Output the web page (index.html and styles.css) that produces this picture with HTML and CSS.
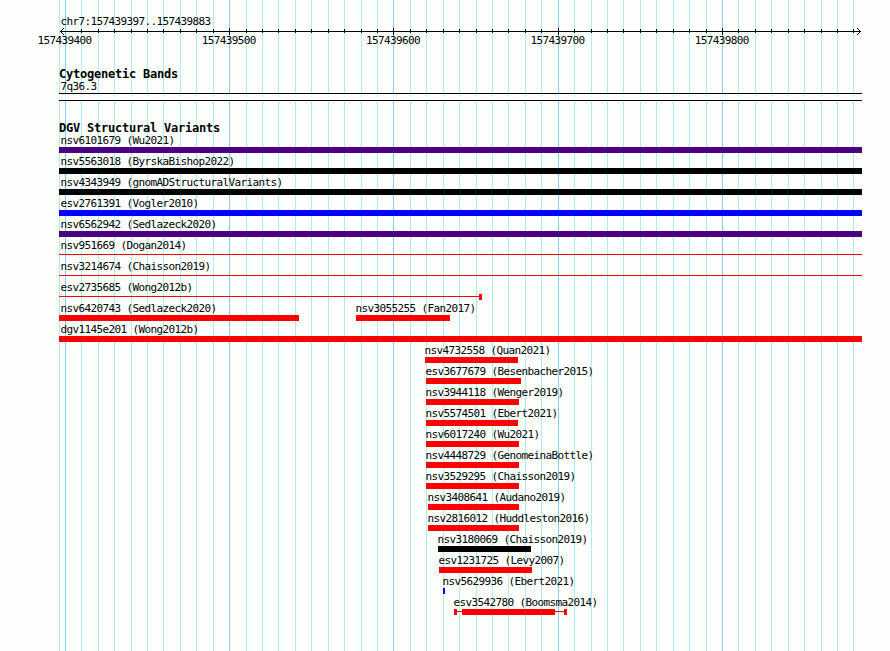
FILE: index.html
```html
<!DOCTYPE html>
<html lang="en">
<head>
    <meta charset="UTF-8">
    <title>chr7:157439397..157439883</title>
    <link rel="stylesheet" href="styles.css">
</head>
<body>

<div class="browser">
    <svg class="grid" id="grid" width="890" height="651" shape-rendering="crispEdges"></svg>

    <div class="range">chr7:157439397..157439883</div>
    <svg class="ruler" id="ruler" width="890" height="9" shape-rendering="crispEdges"></svg>
    <div class="ruler-labels">
        <span>157439400</span>
        <span>157439500</span>
        <span>157439600</span>
        <span>157439700</span>
        <span>157439800</span>
    </div>

    <section class="track cytoband">
        <h2>Cytogenetic Bands</h2>
        <div class="label">7q36.3</div>
        <div class="band"></div>
    </section>

    <section class="track variants">
        <h2>DGV Structural Variants</h2>
        <div id="rows"></div>
    </section>
</div>

<script>
    const left = 59;
    const right = 862;

    // Grid lines every 10 bp, the major ones every 100 bp
    const ticks = [];
    for (let i = 0; i <= 48; i++) {
        ticks.push({ x: Math.floor(65.3 + i * 16.43), major: i % 10 === 0 });
    }

    let lines = `<rect class="minor" x="${left}" y="0" width="1" height="651"/>`;
    let ruler = '<rect x="60" y="4" width="801" height="1"/>';
    ticks.forEach(t => {
        lines += `<rect class="${t.major ? 'major' : 'minor'}" x="${t.x}" y="0" width="1" height="651"/>`;
        // no tick under the left arrow head
        if (t.x < 70) return;
        ruler += t.major
            ? `<rect x="${t.x}" y="1" width="1" height="7"/>`
            : `<rect x="${t.x}" y="2" width="1" height="4"/>`;
    });
    // Arrow heads
    for (let i = 1; i <= 3; i++) {
        ruler += `<rect x="${60 + i}" y="${4 - i}" width="1" height="1"/><rect x="${60 + i}" y="${4 + i}" width="1" height="1"/>`;
        ruler += `<rect x="${860 - i}" y="${4 - i}" width="1" height="1"/><rect x="${860 - i}" y="${4 + i}" width="1" height="1"/>`;
    }
    document.getElementById('grid').innerHTML = lines;
    document.getElementById('ruler').innerHTML = ruler;

    // name, type, then [start, end, shape] segments
    const rows = [
        [['nsv6101679 (Wu2021)', 'complex', [left, right, 'bar']]],
        [['nsv5563018 (ByrskaBishop2022)', 'other', [left, right, 'bar']]],
        [['nsv4343949 (gnomADStructuralVariants)', 'other', [left, right, 'bar']]],
        [['esv2761391 (Vogler2010)', 'gain', [left, right, 'bar']]],
        [['nsv6562942 (Sedlazeck2020)', 'complex', [left, right, 'bar']]],
        [['nsv951669 (Dogan2014)', 'loss', [left, right, 'line']]],
        [['nsv3214674 (Chaisson2019)', 'loss', [left, right, 'line']]],
        [['esv2735685 (Wong2012b)', 'loss', [left, 479, 'line'], [479, 482, 'bar']]],
        [['nsv6420743 (Sedlazeck2020)', 'loss', [left, 299, 'bar']],
         ['nsv3055255 (Fan2017)', 'loss', [356, 450, 'bar']]],
        [['dgv1145e201 (Wong2012b)', 'loss', [left, right, 'bar']]],
        [['nsv4732558 (Quan2021)', 'loss', [425, 518, 'bar']]],
        [['esv3677679 (Besenbacher2015)', 'loss', [426, 521, 'bar']]],
        [['nsv3944118 (Wenger2019)', 'loss', [426, 519, 'bar']]],
        [['nsv5574501 (Ebert2021)', 'loss', [426, 518, 'bar']]],
        [['nsv6017240 (Wu2021)', 'loss', [426, 519, 'bar']]],
        [['nsv4448729 (GenomeinaBottle)', 'loss', [426, 519, 'bar']]],
        [['nsv3529295 (Chaisson2019)', 'loss', [426, 519, 'bar']]],
        [['nsv3408641 (Audano2019)', 'loss', [428, 519, 'bar']]],
        [['nsv2816012 (Huddleston2016)', 'loss', [428, 519, 'bar']]],
        [['nsv3180069 (Chaisson2019)', 'other', [438, 531, 'bar']]],
        [['esv1231725 (Levy2007)', 'loss', [439, 532, 'bar']]],
        [['nsv5629936 (Ebert2021)', 'gain', [443, 445, 'bar']]],
        [['esv3542780 (Boomsma2014)', 'loss', [454, 457, 'bar'], [457, 462, 'line'],
          [462, 555, 'bar'], [555, 564, 'line'], [564, 567, 'bar']]]
    ];

    let html = '';
    rows.forEach(row => {
        let end = left;
        html += '<div class="row">';
        row.forEach(([name, type, ...segments]) => {
            const start = segments[0][0];
            const stop = segments[segments.length - 1][1];
            html += `<div class="feature ${type}" style="margin-left: ${start - end}px; width: ${stop - start}px">`;
            html += `<div class="label${start === left ? ' edge' : ''}">${name}</div><div class="glyph">`;
            segments.forEach(s => {
                html += `<i class="${s[2]}" style="width: ${s[1] - s[0]}px"></i>`;
            });
            html += '</div></div>';
            end = stop;
        });
        html += '</div>';
    });
    document.getElementById('rows').innerHTML = html;
</script>

</body>
</html>
```
FILE: styles.css
```css
body {
    margin: 0;
    background-color: #fcfffc;
    color: #000;
    font: 11px/12px "DejaVu Sans Mono", monospace;
    letter-spacing: -0.62px;
    overflow: hidden;
}
.browser {
    position: relative;
    width: 890px;
    height: 651px;
    overflow: hidden;
}
/* Vertical guide lines behind all the tracks */
.grid {
    position: absolute;
    top: 0;
    left: 0;
    z-index: -1;
}
.minor {
    fill: #afeeee;
}
.major {
    fill: #87ceeb;
}
.range {
    height: 11px;
    padding: 16px 0 0 60.5px;
}
.ruler {
    display: block;
}
.ruler-labels {
    display: flex;
    gap: 110.3px;
    margin: -1px 0 0 37.5px;
}
.ruler-labels span {
    width: 54px;
    white-space: nowrap;
}
.track {
    width: 803px;
    margin-left: 59px;
}
.track h2 {
    margin: 0;
    font-size: 12px;
    line-height: 12px;
    letter-spacing: -0.22px;
}
.cytoband {
    padding-top: 21px;
}
.label {
    box-sizing: border-box;
    height: 13px;
    padding-top: 1px;
    white-space: nowrap;
}
.cytoband .label {
    padding-left: 1.5px;
}
.band {
    height: 6px;
    background-color: #fff;
    border-top: 1px solid #000;
    border-bottom: 1px solid #000;
}
.variants {
    padding-top: 21px;
}
.row {
    display: flex;
    height: 21px;
}
.feature .label {
    margin-left: -0.5px;
}
.feature .label.edge {
    margin-left: 1.5px;
}
.glyph {
    display: flex;
    height: 6px;
}
.bar {
    height: 6px;
    background-color: currentColor;
}
.line {
    height: 1px;
    margin-top: 2px;
    background-color: currentColor;
}
.loss .glyph {
    color: #f00;
}
.gain .glyph {
    color: #00f;
}
.complex .glyph {
    color: #4b0082;
}
```
